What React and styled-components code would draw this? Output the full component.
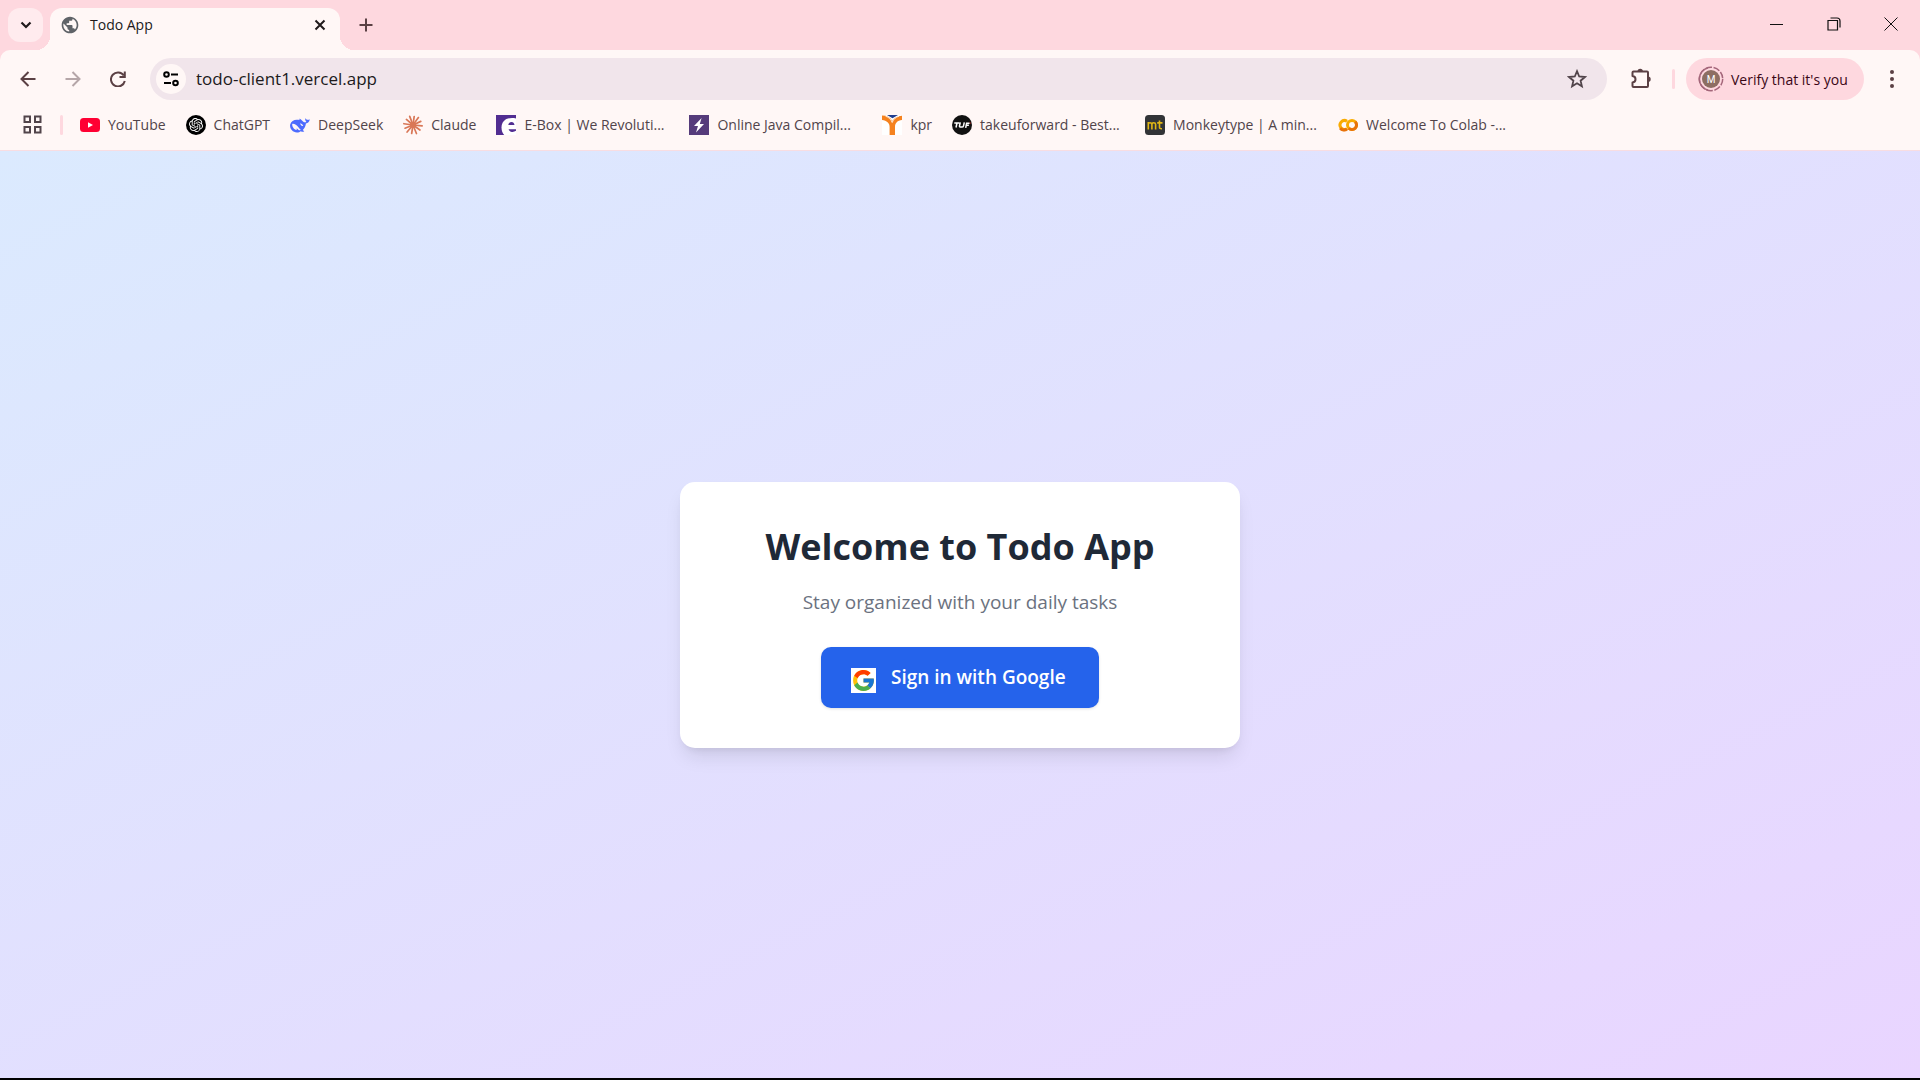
import React from "react";
import styled, { createGlobalStyle } from "styled-components";
import { SiOpenai } from "react-icons/si";
import { FcGoogle } from "react-icons/fc";
import { MdPublic } from "react-icons/md";

const GlobalStyle = createGlobalStyle`
  *, *::before, *::after { box-sizing: border-box; }
  body {
    margin: 0;
    font-family: "Open Sans", "Noto Sans", sans-serif;
    background: #000;
  }
  button, input { font: inherit; color: inherit; }
  button { border: 0; padding: 0; background: none; cursor: pointer; }
  svg { display: block; flex: none; }
`;

const Window = styled.div`
  display: flex;
  flex-direction: column;
  min-height: 100vh;
  padding-bottom: 2px;
`;

const Chrome = styled.header`
  background: #fed8df;
`;

const TabStrip = styled.div`
  display: flex;
  align-items: flex-end;
  height: 50px;
  padding: 0 1px 0 8px;
`;

const TabSearch = styled.button`
  display: grid;
  place-items: center;
  width: 35px;
  height: 34px;
  margin: 0 7px 8px 0;
  border-radius: 12px;
  background: #ffebee;
  color: #201a1b;
`;

const Tab = styled.div`
  position: relative;
  display: flex;
  align-items: center;
  width: 290px;
  height: 42px;
  padding: 0 8px 8px 10px;
  border-radius: 12px 12px 0 0;
  background: #fff7f6;
  color: #201a1b;

  &::before,
  &::after {
    content: "";
    position: absolute;
    bottom: 0;
    width: 14px;
    height: 14px;
  }
  &::before {
    right: 100%;
    background: radial-gradient(circle at 0 0, transparent 14px, #fff7f6 14px);
  }
  &::after {
    left: 100%;
    background: radial-gradient(circle at 100% 0, transparent 14px, #fff7f6 14px);
  }
`;

const TabTitle = styled.span`
  flex: 1;
  margin-left: 10px;
  font-size: 14px;
  line-height: 20px;
`;

const IconButton = styled.button`
  display: grid;
  place-items: center;
  flex: none;
  width: ${(p) => p.$width || 45}px;
  height: ${(p) => p.$height || 42}px;
  color: ${(p) => p.$color || "#5b4044"};
`;

const WindowControls = styled.div`
  display: flex;
  margin-left: auto;
  height: 50px;
`;

const Toolbar = styled.div`
  display: flex;
  align-items: center;
  height: 58px;
  padding: 0 6px 0 5px;
  border-radius: 10px 10px 0 0;
  background: #fff7f6;
`;

const AddressBar = styled.label`
  display: flex;
  flex: 1;
  align-items: center;
  height: 42px;
  margin: 0 10px;
  padding: 0 8px 0 6px;
  border-radius: 21px;
  background: #f1e5eb;
`;

const SiteInfo = styled.span`
  display: grid;
  place-items: center;
  width: 30px;
  height: 30px;
  border-radius: 50%;
  background: #fff7f6;
`;

const AddressInput = styled.input`
  flex: 1;
  min-width: 0;
  margin-left: 10px;
  padding: 0;
  border: 0;
  outline: 0;
  background: none;
  color: #201a1b;
  font-size: 17px;
  line-height: 24px;
`;

const Divider = styled.span`
  flex: none;
  width: 3px;
  height: 20px;
  margin: ${(p) => p.$margin};
  border-radius: 2px;
  background: #fed8df;
`;

const ProfileButton = styled.button`
  display: flex;
  align-items: center;
  height: 42px;
  width: 178px;
  margin-right: 6px;
  padding-left: 12px;
  gap: 7px;
  border-radius: 21px;
  background: #fed8df;
  color: #3b0716;
  font-size: 14px;
  white-space: nowrap;
`;

const Bookmarks = styled.nav`
  display: flex;
  align-items: center;
  height: 43px;
  padding: 0 22px 9px;
  border-bottom: 1px solid #f8dde2;
  background: #fff7f6;
`;

const BookmarkList = styled.div`
  display: flex;
  gap: 20px;
`;

const Bookmark = styled.a`
  display: flex;
  align-items: center;
  gap: 8px;
  width: ${(p) => (p.$long ? "173px" : "auto")};
  color: #51444a;
  font-size: 14px;
  line-height: 20px;
  text-decoration: none;
  white-space: nowrap;
`;

const Page = styled.main`
  display: flex;
  flex: 1;
  align-items: center;
  justify-content: center;
  background: linear-gradient(to bottom right, #dbeafe, #e9d5ff);
`;

const Card = styled.section`
  display: flex;
  flex-direction: column;
  align-items: center;
  width: 100%;
  max-width: 560px;
  padding: 40px;
  border-radius: 15px;
  background: #fff;
  box-shadow: 0 12px 19px -4px rgba(0, 0, 0, 0.1), 0 5px 8px -5px rgba(0, 0, 0, 0.1);
`;

const Title = styled.h1`
  margin: 0 0 15px;
  color: #1f2937;
  font-size: 36px;
  line-height: 50px;
  font-weight: 700;
`;

const Subtitle = styled.p`
  margin: 0 0 30px;
  color: #6b7280;
  font-size: 19px;
  line-height: 30px;
`;

const SignIn = styled.button`
  display: flex;
  align-items: center;
  gap: 15px;
  min-width: 278px;
  height: 61px;
  padding: 0 30px;
  border-radius: 10px;
  background: #2563eb;
  color: #fff;
  font-size: 19px;
  font-weight: 600;
  box-shadow: 0 1px 3px rgba(0, 0, 0, 0.12);
`;

const GoogleBadge = styled.span`
  display: grid;
  place-items: center;
  width: 25px;
  height: 25px;
  margin-top: 6px;
  background: #fff;
`;

const Line = ({ size, children, w = 2 }) => (
  <svg width={size} height={size} viewBox={`0 0 ${size} ${size}`} fill="none" stroke="currentColor" strokeWidth={w}>
    {children}
  </svg>
);

const Avatar = () => (
  <svg width="26" height="26" viewBox="0 0 26 26">
    <circle cx="13" cy="13" r="11.7" fill="none" stroke="#a4667a" strokeWidth="1.5" strokeDasharray="6.6 1.6" />
    <path d="M10 1.7A11.7 11.7 0 0 0 10 24.3" fill="none" stroke="#a4667a" strokeWidth="1.5" />
    <circle cx="13" cy="13" r="9" fill="#8d6e63" />
    <text x="13" y="16.5" textAnchor="middle" fontSize="10" fontFamily="Roboto, sans-serif" fill="#fff">M</text>
  </svg>
);

const Burst = () => (
  <svg width="20" height="20" viewBox="-10 -10 20 20" stroke="#d97757" strokeWidth="1.7" strokeLinecap="round">
    {[0, 28, 57, 88, 118, 150, 181, 212, 240, 270, 302, 331].map((a, i) => (
      <path key={a} d={`M0 0V${i % 2 ? -9.2 : -8.6}`} transform={`rotate(${a + 8})`} />
    ))}
    <circle r="3" fill="#d97757" stroke="none" />
  </svg>
);

const icons = {
  youtube: (
    <svg width="20" height="20" viewBox="0 0 20 20">
      <rect y="3" width="20" height="14" rx="3.5" fill="#ff0033" />
      <path d="M8 7.2v5.6l5-2.8z" fill="#fff" />
    </svg>
  ),
  chatgpt: (
    <svg width="20" height="20" viewBox="0 0 20 20">
      <circle cx="10" cy="10" r="10" fill="#000" />
      <SiOpenai x="3" y="3" size={14} color="#fff" />
    </svg>
  ),
  deepseek: (
    <svg width="20" height="20" viewBox="0 0 20 20">
      <path
        d="M19.8 4.3c-.8.5-1.5.6-2.3.5-.9-.1-1.5-.7-2.2-1.6-.3 1.7.1 2.9 1.1 3.8-1.1.6-2.4.3-3.4-.6-1-.9-1.6-1.8-2.8-2.5-.5-.3-1-.2-.8.4.1.4.3.6.1.8-4.2-1.3-8.3.5-9.3 4.5-.8 3.8 2.2 7.9 6.7 7.9 1.6 0 2.9-.5 3.9-1.3.9.4 2.1.8 3 .4.5-.2.4-.6 0-.8-.6-.3-.9-.5-1-.8 1.9-1.6 2.9-3.8 3.1-6.4 2-.4 3.5-1.7 3.9-4.3z"
        fill="#4d6bfe"
      />
      <path d="M2.2 8.9c2.2-.4 4.5 1.1 6 3.2 1 1.4 1.9 2.4 2.7 3-1 .3-2.1.1-2.9-.7l-1.3-1.1c.2.9.1 1.4-.2 1.8-2.5-.7-4.500-3.500-4.300-6.200z" fill="#fff7f6" />
      <path d="M10 8.6c1.5-.2 2.7.9 3.2 2.3-.9.3-1.7 0-2.2-.6z" fill="#fff7f6" />
    </svg>
  ),
  claude: <Burst />,
  ebox: (
    <svg width="20" height="20" viewBox="0 0 20 20">
      <path fill="#512d91" d="M0 0h20v20H0z" />
      <path d="M20 3.4C11 1.5 5.500 6 5.500 12.500c0 3.200 1 5.800 2.700 7.500H20z" fill="#fff" />
      <path d="M12.300 9.900c.4-1.900 1.500-2.900 3.200-2.900s2.700 1 3 2.900zM12.600 14.200H20v1.600c-1.200.9-2.500 1.200-4 1.100-1.800-.2-3-1.200-3.400-2.700z" fill="#512d91" />
    </svg>
  ),
  java: (
    <svg width="20" height="20" viewBox="0 0 20 20">
      <path fill="#553b7b" d="M0 0h20v20H0z" />
      <path d="M12.6 3 5 11h4l-2 6.5L15 9h-4.200z" fill="#fff" />
    </svg>
  ),
  kpr: (
    <svg width="20" height="20" viewBox="0 0 20 20">
      <path fill="#fff" d="M0 0h20v20H0z" />
      <path d="M5 0h11l-5.500 3.300z" fill="#1f3d8f" />
      <path d="M0 .6C5 .5 8.4 2.5 10.200 6 12 3 15 1 20 .8V5c-4.600.4-7 3-7 7v8H7.600v-8C7.600 8.200 4.800 5.400 0 5z" fill="#f5821f" />
      <path d="M3.5 1.2C7 2.2 9 4.5 10.200 7.500 11.500 4 14 2 17 1.200" fill="none" stroke="#fff" strokeWidth=".8" />
    </svg>
  ),
  tuf: (
    <svg width="20" height="20" viewBox="0 0 20 20">
      <circle cx="10" cy="10" r="10" fill="#111" />
      <path d="M2.3 8h5M5 8l-1 4.500M8.300 7.300l-.8 3.500q-.2 1.300 1.300 1.300h1.100q1.300 0 1.600-1.300l.8-3.500M13.700 12.800l.9-4.500h3M14.300 10.300h2.600" fill="none" stroke="#fff" strokeWidth="1.500" />
      <path d="m17.5 7.3 1.3.5-.7 1.200z" fill="#e2231a" />
    </svg>
  ),
  monkeytype: (
    <svg width="20" height="20" viewBox="0 0 20 20">
      <rect width="20" height="20" rx="3.5" fill="#323437" />
      <path d="M3.3 14.500V7M3.300 9.300q0-1.600 1.700-1.600t1.900 1.600v5.200M6.900 9.300q0-1.600 1.800-1.600t1.900 1.600v5.200M14.500 5.500v6.700q0 1.700 2.500 1.500M12.200 7.900h5.300" fill="none" stroke="#e2b714" strokeWidth="1.600" />
    </svg>
  ),
  colab: (
    <svg width="20" height="20" viewBox="0 0 20 20" fill="none" strokeWidth="3">
      <path d="M9 6.2A4.500 4.500 0 1 0 9 13.800" stroke="#f9ab00" />
      <path d="M2.2 13.100A4.500 4.500 0 0 0 9 13.800" stroke="#e8710a" />
      <circle cx="14" cy="10" r="4.500" stroke="#f9ab00" />
      <path d="M17.200 6.800a4.500 4.500 0 0 1-6.400 6.400" stroke="#e8710a" />
    </svg>
  ),
};

const bookmarks = [
  { icon: "youtube", label: "YouTube" },
  { icon: "chatgpt", label: "ChatGPT" },
  { icon: "deepseek", label: "DeepSeek" },
  { icon: "claude", label: "Claude" },
  { icon: "ebox", label: "E-Box | We Revoluti...", long: true },
  { icon: "java", label: "Online Java Compil...", long: true },
  { icon: "kpr", label: "kpr" },
  { icon: "tuf", label: "takeuforward - Best...", long: true },
  { icon: "monkeytype", label: "Monkeytype | A min...", long: true },
  { icon: "colab", label: "Welcome To Colab -...", long: true },
];

export default function App() {
  return (
    <Window>
      <GlobalStyle />
      <Chrome>
        <TabStrip>
          <TabSearch aria-label="Search tabs">
            <Line size={12} w={2.2}><path d="m1.5 3.5 4.500 4.500 4.500-4.500" /></Line>
          </TabSearch>
          <Tab>
            <MdPublic size={20} color="#5f6368" />
            <TabTitle>Todo App</TabTitle>
            <IconButton $width={24} $height={24} $color="#201a1b" aria-label="Close tab">
              <Line size={12}><path d="m1.5 1.5 9 9M10.500 1.500l-9 9" /></Line>
            </IconButton>
          </Tab>
          <IconButton $width={52} $height={50} aria-label="New tab">
            <Line size={14}><path d="M7 .5v13M.5 7h13" /></Line>
          </IconButton>
          <WindowControls>
            <IconButton $width={57} $height={48} $color="#111" aria-label="Minimize">
              <Line size={13} w={1}><path d="M0 6.500h13" /></Line>
            </IconButton>
            <IconButton $width={57} $height={48} $color="#111" aria-label="Restore">
              <Line size={14} w={1.2}><path d="M1 3.500h9.500V13H1zM3.500 1h6.500q3 0 3 3v6.500" /></Line>
            </IconButton>
            <IconButton $width={57} $height={48} $color="#111" aria-label="Close">
              <Line size={14} w={1}><path d="m.5.5 13 13M13.500.5l-13 13" /></Line>
            </IconButton>
          </WindowControls>
        </TabStrip>
        <Toolbar>
          <IconButton aria-label="Back">
            <Line size={16}><path d="M15.500 8H2M8.500 1 1.500 8l7 7" /></Line>
          </IconButton>
          <IconButton $color="#b5a6a8" aria-label="Forward">
            <Line size={16}><path d="M.5 8H14M7.500 1l7 7-7 7" /></Line>
          </IconButton>
          <IconButton aria-label="Reload">
            <Line size={16}><path d="M13.800 4.500A7 7 0 1 0 14.800 10M14.800.500V6H9.500" /></Line>
          </IconButton>
          <AddressBar>
            <SiteInfo>
              <Line size={16} w={2}>
                <circle cx="3.500" cy="3.500" r="2.300" /><path d="M8 3.500h7M1 12h7" /><circle cx="12.500" cy="12" r="2.300" />
              </Line>
            </SiteInfo>
            <AddressInput aria-label="Address" defaultValue="todo-client1.vercel.app" />
            <IconButton as="span" $width={44} $color="#51444a">
              <Line size={20} w={1.8}>
                <path d="m10 2.200 2.200 5.300 5.700.5-4.300 3.700 1.300 5.600-4.900-3-4.900 3 1.300-5.600L2.100 8l5.700-.5z" />
              </Line>
            </IconButton>
          </AddressBar>
          <IconButton $width={48} aria-label="Extensions">
            <svg width="22" height="22" viewBox="0 0 22 22">
              <path d="M2.500 4.500q0-1 1-1H17q1 0 1 1V18q0 1-1 1H3.500q-1 0-1-1v-3.500c4-.5 4-6 0-6.500z" fill="none" stroke="currentColor" strokeWidth="2" strokeLinejoin="round" />
              <path d="M7.500 3.500a2.700 2.700 0 0 1 5.400 0zM18 8.500a2.700 2.700 0 0 1 0 5.400z" fill="currentColor" />
            </svg>
          </IconButton>
          <Divider $margin="0 11px 0 7px" />
          <ProfileButton>
            <Avatar />
            Verify that it's you
          </ProfileButton>
          <IconButton $width={44} aria-label="Menu">
            <svg width="18" height="18" viewBox="0 0 18 18" fill="currentColor">
              <circle cx="9" cy="2" r="2" /><circle cx="9" cy="9" r="2" /><circle cx="9" cy="16" r="2" />
            </svg>
          </IconButton>
        </Toolbar>
        <Bookmarks aria-label="Bookmarks">
          <IconButton $width={20} $height={20} $color="#51444a" aria-label="Apps">
            <Line size={19}><path d="M1.500 1.500h5.500V7H1.500zM12 1.500h5.500V7H12zM1.500 12h5.500v5.500H1.500zM12 12h5.500v5.500H12z" /></Line>
          </IconButton>
          <Divider $margin="0 17px 0 18px" />
          <BookmarkList>
            {bookmarks.map((b) => (
              <Bookmark key={b.icon} href="#" $long={b.long}>
                {icons[b.icon]}
                {b.label}
              </Bookmark>
            ))}
          </BookmarkList>
        </Bookmarks>
      </Chrome>
      <Page>
        <Card>
          <Title>Welcome to Todo App</Title>
          <Subtitle>Stay organized with your daily tasks</Subtitle>
          <SignIn>
            <GoogleBadge><FcGoogle size={25} /></GoogleBadge>
            Sign in with Google
          </SignIn>
        </Card>
      </Page>
    </Window>
  );
}
